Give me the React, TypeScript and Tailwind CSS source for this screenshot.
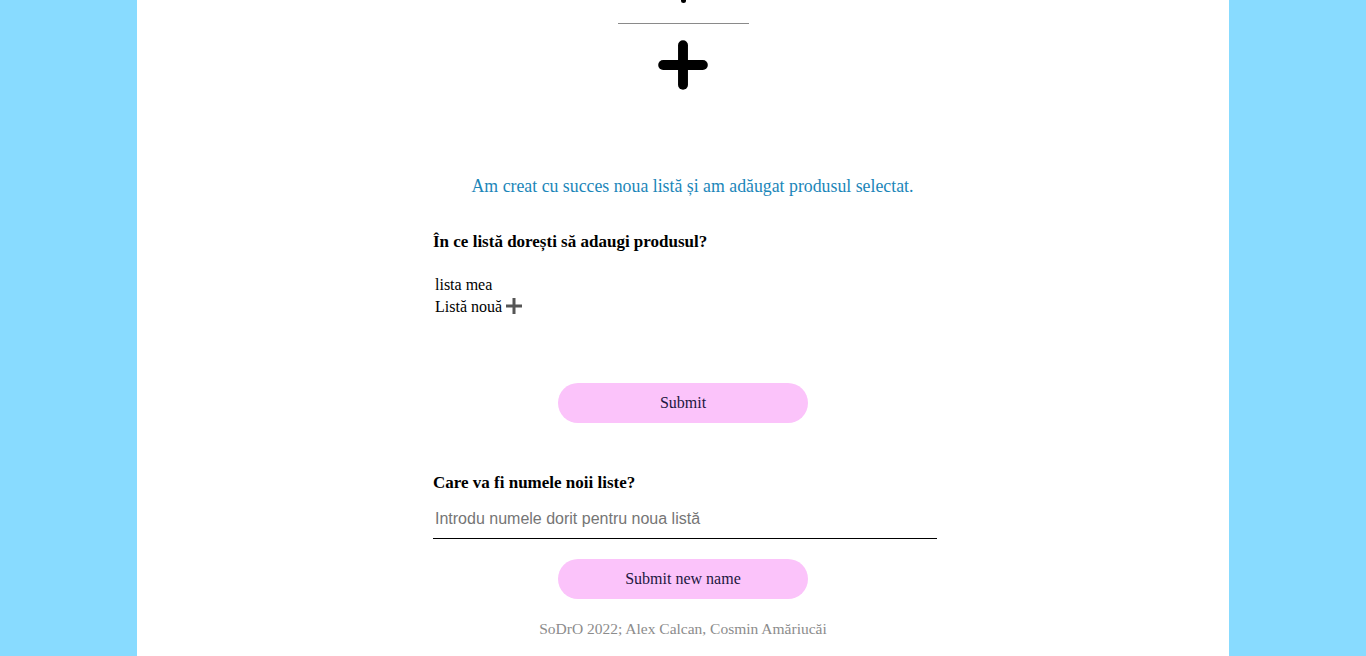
import { Plus } from "lucide-react";

export default function App() {
  return (
    <div className="min-h-screen bg-[#88dbff] flex justify-center overflow-hidden" style={{ height: 656 }}>
      <div className="w-[1092px] bg-white flex flex-col items-center font-['Liberation_Serif',serif] text-black">
        {/* tail of the heading above the fold */}
        <div className="h-[3px] w-full flex justify-center">
          <div className="w-[5px] h-[3px] bg-black rounded-b-full" />
        </div>
        <div className="mt-[20px] w-[131px] h-px bg-[#8a8a8a]" />
        <Plus className="mt-[7px] w-[68px] h-[68px]" strokeWidth={3.5} />

        <p className="mt-[75px] text-[17.8px] leading-6 text-[#1b86b9] pl-[19px]">
          Am creat cu succes noua listă și am adăugat produsul selectat.
        </p>

        <div className="w-[504px] ml-[4px] mt-[32px]">
          <h3 className="text-[17px] font-bold leading-6">În ce listă dorești să adaugi produsul?</h3>
          <ul className="mt-[20px] pl-[2px] text-[16px] leading-[22px]">
            <li>lista mea</li>
            <li className="flex items-center gap-[3px]">
              Listă nouă
              <svg width="18" height="18" viewBox="0 0 18 18" className="mt-[-2px]">
                <path d="M9 1v16M1 9h16" stroke="#555" strokeWidth="3" />
              </svg>
            </li>
          </ul>
        </div>

        <button className="mt-[65px] w-[250px] h-[40px] rounded-full bg-[#fbc3fa] text-[16px] text-[#1c1640]">
          Submit
        </button>

        <div className="w-[504px] ml-[4px] mt-[48px]">
          <h3 className="text-[17px] font-bold leading-6">Care va fi numele noii liste?</h3>
          <input
            className="mt-[6px] w-full h-[38px] border-b border-black px-[2px] pb-[2px] text-[16px] font-['Liberation_Sans',sans-serif] placeholder:text-[#757575] outline-none"
            placeholder="Introdu numele dorit pentru noua listă"
          />
        </div>

        <button className="mt-[20px] w-[250px] h-[40px] rounded-full bg-[#fbc3fa] text-[16px] text-[#1c1640]">
          Submit new name
        </button>

        <p className="mt-[20px] text-[15.5px] leading-5 text-[#8c8c8c]">SoDrO 2022; Alex Calcan, Cosmin Amăriucăi</p>
      </div>
    </div>
  );
}
